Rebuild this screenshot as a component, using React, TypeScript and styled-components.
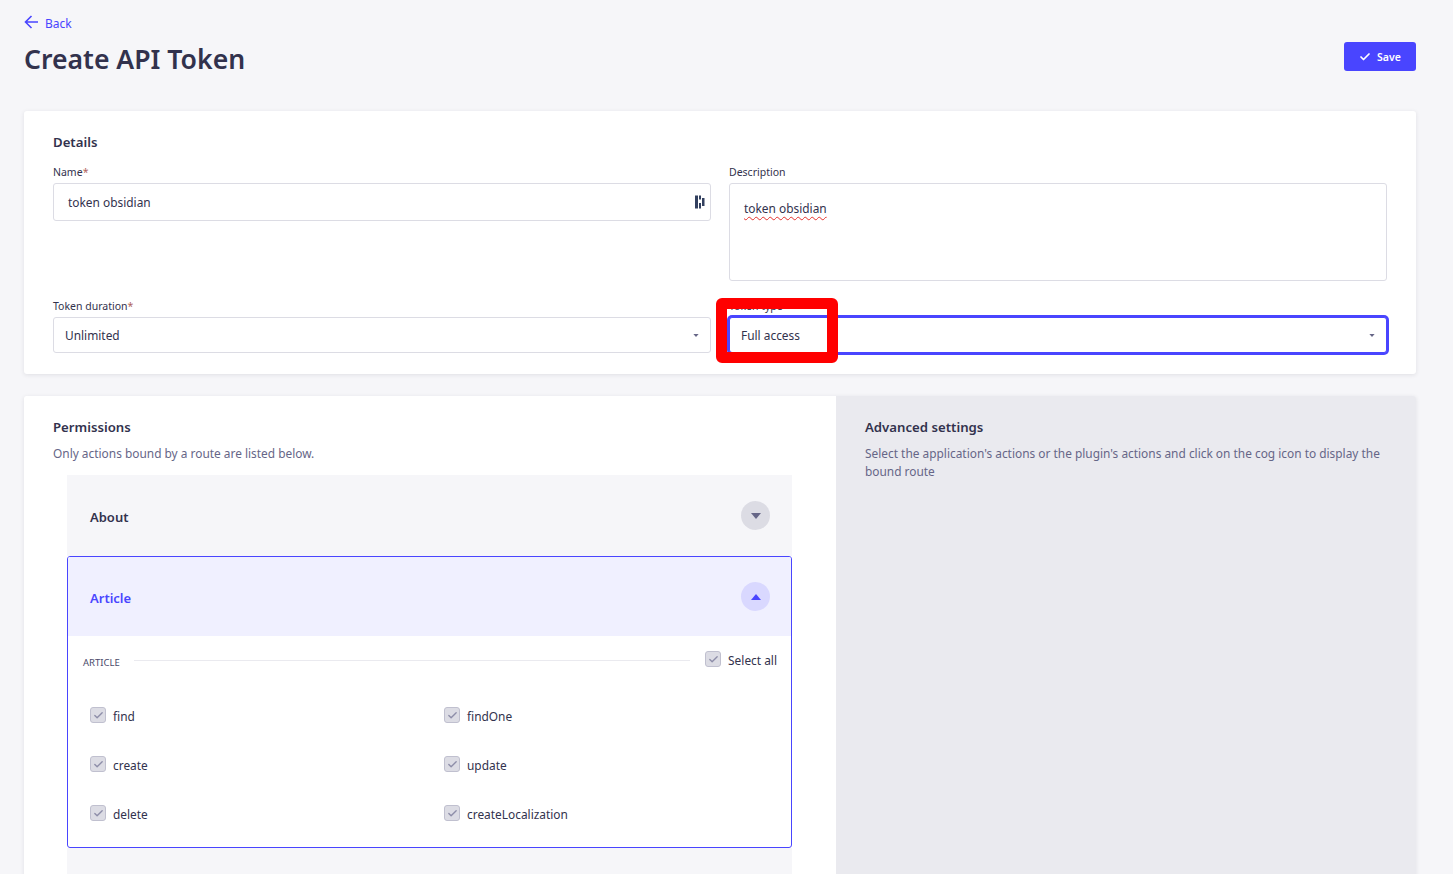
import styled, { createGlobalStyle } from 'styled-components';
import { Check } from 'lucide-react';

const GlobalStyle = createGlobalStyle`
  html, body {
    margin: 0;
    height: 100%;
    overflow: hidden;
    background: #f6f6f9;
    font-family: 'Noto Sans', 'Open Sans', sans-serif;
    color: #32324d;
  }
`;

const Page = styled.div`
  width: 1453px;
  height: 874px;
  overflow: hidden;
  position: relative;
  box-sizing: border-box;
  padding: 14px 37px 0 24px;
`;

const BackLink = styled.a`
  display: flex;
  align-items: center;
  gap: 7px;
  height: 18px;
  font-size: 12px;
  color: #4945ff;
`;

const BackArrow = styled.svg`
  width: 14px;
  height: 14px;
  margin-top: -3px;
  fill: none;
  stroke: #4945ff;
  stroke-width: 1.6;
`;

const Header = styled.header`
  display: flex;
  justify-content: space-between;
  align-items: flex-start;
  height: 44px;
  margin-top: 5px;
  margin-bottom: 30px;
`;

const Title = styled.h1`
  margin: 0;
  font-size: 26.6px;
  line-height: 44px;
  font-weight: 600;
  color: #32324d;
`;

const SaveButton = styled.button`
  display: flex;
  align-items: center;
  justify-content: center;
  gap: 6px;
  width: 72px;
  height: 29px;
  margin-top: 5px;
  border: 0;
  border-radius: 3px;
  background: #4945ff;
  color: #fff;
  font: 600 10.5px 'Noto Sans', sans-serif;
  padding: 0;
  svg { width: 12px; height: 12px; stroke-width: 3.5; }
`;

const DetailsCard = styled.section`
  background: #fff;
  border-radius: 3px;
  box-shadow: 0 1px 4px rgba(33, 33, 52, 0.1);
  padding: 22px 29px 21px;
  height: 263px;
  box-sizing: border-box;
`;

const SectionTitle = styled.h2`
  margin: 0;
  font-size: 13.2px;
  line-height: 18px;
  font-weight: 600;
  color: #32324d;
`;

const FieldGrid = styled.div`
  display: grid;
  grid-template-columns: 658px 658px;
  column-gap: 18px;
  margin-top: 13px;
`;

const Field = styled.div<{ $rowHeight: number }>`
  height: ${(p) => p.$rowHeight}px;
`;

const Label = styled.div`
  font-size: 10.5px;
  line-height: 16px;
  height: 16px;
  color: #32324d;
  margin-bottom: 3px;
  span { color: #b0625c; }
`;

const Box = styled.div<{ $height: number; $focus?: boolean; $px?: number }>`
  box-sizing: border-box;
  height: ${(p) => p.$height}px;
  display: flex;
  align-items: center;
  justify-content: space-between;
  padding: 0 ${(p) => p.$px ?? 14}px;
  border: 1px solid ${(p) => (p.$focus ? '#4945ff' : '#dcdce4')};
  box-shadow: ${(p) => (p.$focus ? '0 0 0 2px #4945ff' : 'none')};
  border-radius: 3px;
  font-size: 11.9px;
  color: #32324d;
  background: #fff;
`;

const TextareaBox = styled(Box)`
  align-items: flex-start;
  padding-top: 14px;
  line-height: 20px;
`;

const Misspelled = styled.span`
  text-decoration: underline wavy #e5322d 1px;
  text-underline-offset: 3px;
`;

const ManagerIcon = styled.svg`
  width: 10px;
  height: 14px;
  margin-right: -9px;
  fill: #32405f;
`;

const Caret = styled.svg`
  width: 6px;
  height: 3px;
  fill: #666687;
  flex: none;
`;

const PermissionsCard = styled.section`
  display: grid;
  grid-template-columns: 812px 580px;
  margin-top: 22px;
  height: 520px;
  border-radius: 3px;
  overflow: hidden;
  box-shadow: 0 1px 4px rgba(33, 33, 52, 0.1);
`;

const PermissionsPane = styled.div`
  background: #fff;
  padding: 22px 44px 0 29px;
`;

const SettingsPane = styled.aside`
  background: #eaeaef;
  padding: 22px 29px 0 29px;
`;

const Hint = styled.p`
  margin: 8px 0 0;
  font-size: 11.9px;
  line-height: 18px;
  color: #666687;
`;

const Accordion = styled.div`
  margin: 13px 0 0 14px;
`;

const Row = styled.div<{ $open?: boolean }>`
  box-sizing: border-box;
  height: ${(p) => (p.$open ? 79 : 81)}px;
  display: flex;
  align-items: center;
  justify-content: space-between;
  padding: ${(p) => (p.$open ? '0 21px 0 22px' : '0 22px 0 23px')};
  background: ${(p) => (p.$open ? '#f0f0ff' : '#f6f6f9')};
  font-size: 13px;
  font-weight: 600;
  color: ${(p) => (p.$open ? '#4945ff' : '#32324d')};
`;

const RowTitle = styled.span`
  margin-top: 3px;
`;

const Toggle = styled.span<{ $open?: boolean }>`
  width: 29px;
  height: 29px;
  border-radius: 50%;
  display: flex;
  align-items: center;
  justify-content: center;
  background: ${(p) => (p.$open ? '#d9d8ff' : '#dcdce4')};
  svg {
    width: 10px;
    height: 6px;
    fill: ${(p) => (p.$open ? '#4945ff' : '#666687')};
  }
`;

const OpenItem = styled.div`
  box-sizing: border-box;
  height: 292px;
  border: 1px solid #4945ff;
  border-radius: 3px;
  background: #fff;
  overflow: hidden;
`;

const ItemBody = styled.div`
  padding: 15px 14px 0 15px;
`;

const SubHeader = styled.div`
  display: flex;
  align-items: center;
  height: 18px;
`;

const SubLabel = styled.span`
  font-size: 9.5px;
  line-height: 14px;
  margin-top: 6px;
  color: #4a4a6a;
`;

const Rule = styled.span`
  flex: 1;
  height: 1px;
  background: #eaeaef;
  margin: 0 15px 0 14px;
`;

const ActionGrid = styled.div`
  display: grid;
  grid-template-columns: 354px 1fr;
  grid-auto-rows: 49px;
  padding: 38px 0 0 7px;
`;

const CheckRow = styled.label`
  display: flex;
  align-items: center;
  gap: 7px;
  height: 18px;
  font-size: 11.9px;
  color: #32324d;
`;

const CheckBox = styled.span`
  box-sizing: border-box;
  width: 16px;
  height: 16px;
  margin-top: -2px;
  border: 1px solid #c0c0cf;
  border-radius: 3px;
  background: #dcdce4;
  display: flex;
  align-items: center;
  justify-content: center;
  color: #8e8ea9;
  svg { width: 11px; height: 11px; stroke-width: 3; }
`;

const NextRow = styled.div`
  height: 40px;
  background: #f6f6f9;
`;

const Annotation = styled.div`
  position: absolute;
  left: 716px;
  top: 298px;
  box-sizing: border-box;
  width: 122px;
  height: 65px;
  border: 11px solid #ff0000;
  border-radius: 6px;
`;

const HiddenLabel = styled(Label)`
  overflow: hidden;
`;

function CaretDown() {
  return (
    <Caret viewBox="0 0 7 4">
      <path d="M0 0h7L3.500 4z" />
    </Caret>
  );
}

function Checked({ label }: { label: string }) {
  return (
    <CheckRow>
      <CheckBox>
        <Check />
      </CheckBox>
      {label}
    </CheckRow>
  );
}

const actions = ['find', 'findOne', 'create', 'update', 'delete', 'createLocalization'];

export default function App() {
  return (
    <Page>
      <GlobalStyle />
      <BackLink>
        <BackArrow viewBox="0 0 14 14">
          <path d="M14 7H1.500M7.500 1L1.500 7l6 6" />
        </BackArrow>
        Back
      </BackLink>
      <Header>
        <Title>Create API Token</Title>
        <SaveButton>
          <Check />
          Save
        </SaveButton>
      </Header>

      <DetailsCard>
        <SectionTitle>Details</SectionTitle>
        <FieldGrid>
          <Field $rowHeight={134}>
            <Label>
              Name<span>*</span>
            </Label>
            <Box $height={38}>
              token obsidian
              <ManagerIcon viewBox="0 0 10 14">
                <path d="M0 0.500h3v13H0zM4 0.500h2v4H4zM4 8h2v5.500H4zM7 3h2.500v8H7z" />
              </ManagerIcon>
            </Box>
          </Field>
          <Field $rowHeight={134}>
            <Label>Description</Label>
            <TextareaBox $height={98}>
              <Misspelled>token obsidian</Misspelled>
            </TextareaBox>
          </Field>
          <Field $rowHeight={55}>
            <Label>
              Token duration<span>*</span>
            </Label>
            <Box $height={36} $px={11}>
              Unlimited
              <CaretDown />
            </Box>
          </Field>
          <Field $rowHeight={55}>
            <HiddenLabel>Token type</HiddenLabel>
            <Box $height={36} $focus $px={11}>
              Full access
              <CaretDown />
            </Box>
          </Field>
        </FieldGrid>
      </DetailsCard>

      <PermissionsCard>
        <PermissionsPane>
          <SectionTitle>Permissions</SectionTitle>
          <Hint>Only actions bound by a route are listed below.</Hint>
          <Accordion>
            <Row>
              <RowTitle>About</RowTitle>
              <Toggle>
                <svg viewBox="0 0 10 6">
                  <path d="M0 0h10L5 6z" />
                </svg>
              </Toggle>
            </Row>
            <OpenItem>
              <Row $open>
                <RowTitle>Article</RowTitle>
                <Toggle $open>
                  <svg viewBox="0 0 10 6">
                    <path d="M0 6h10L5 0z" />
                  </svg>
                </Toggle>
              </Row>
              <ItemBody>
                <SubHeader>
                  <SubLabel>ARTICLE</SubLabel>
                  <Rule />
                  <Checked label="Select all" />
                </SubHeader>
                <ActionGrid>
                  {actions.map((a) => (
                    <Checked key={a} label={a} />
                  ))}
                </ActionGrid>
              </ItemBody>
            </OpenItem>
            <NextRow />
          </Accordion>
        </PermissionsPane>
        <SettingsPane>
          <SectionTitle>Advanced settings</SectionTitle>
          <Hint>
            Select the application's actions or the plugin's actions and click on the cog icon to display the bound route
          </Hint>
        </SettingsPane>
      </PermissionsCard>

      <Annotation />
    </Page>
  );
}
